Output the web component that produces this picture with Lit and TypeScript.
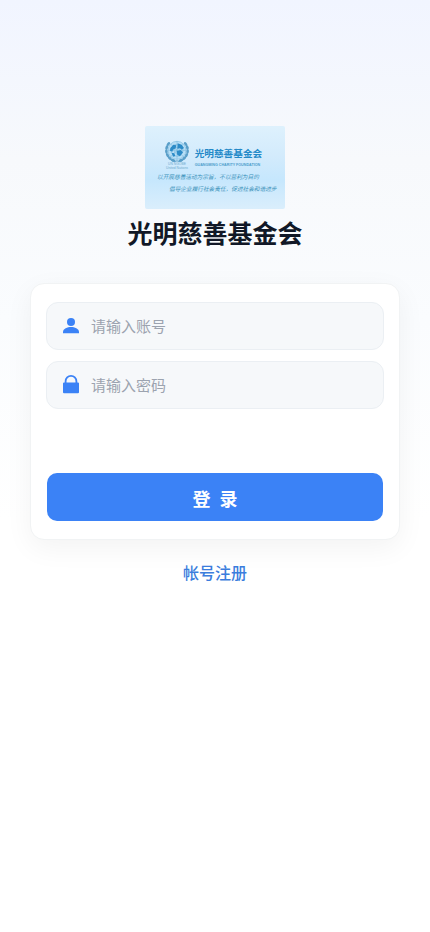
import { LitElement, html, svg, css } from "lit";
import { customElement } from "lit/decorators.js";

const meridians = [0, 45, 90, 135];
const leaves = [1, 2, 3, 4, 5, 6];

@customElement("foundation-banner")
class FoundationBanner extends LitElement {
  static styles = css`
    :host {
      display: block;
      width: 140px;
    }
    .banner {
      display: block;
      width: 100%;
      border-radius: 2px;
      font-family: "Liberation Sans", "Noto Sans CJK SC", sans-serif;
    }
    .name {
      font-size: 29px;
      font-weight: 700;
      fill: #2389c8;
    }
    .latin {
      font-size: 11px;
      font-weight: 700;
      fill: #4d9dcc;
    }
    .caption {
      font-size: 10px;
      fill: #6fa9cd;
      text-anchor: middle;
    }
    .motto {
      font-size: 17px;
      font-style: italic;
      fill: #3a91ba;
    }
  `;

  render() {
    return html`
      <svg class="banner" viewBox="0 0 420 249" role="img" aria-label="光明慈善基金会">
        <defs>
          <linearGradient id="sky" x1="0" y1="0" x2="0" y2="1">
            <stop offset="0" stop-color="#def1fd" />
            <stop offset="0.35" stop-color="#d3ebfc" />
            <stop offset="0.65" stop-color="#c6e7fd" />
            <stop offset="1" stop-color="#daeefc" />
          </linearGradient>
        </defs>
        <rect width="420" height="249" fill="url(#sky)" />
        <g fill="none" stroke="#7dbbe0" stroke-width="2">
          <circle cx="96" cy="73" r="27" fill="#b9dff6" />
          <circle cx="96" cy="73" r="18" />
          <circle cx="96" cy="73" r="9" />
          ${meridians.map(
            (a) => svg`<path d="M69 73h54" transform=${`rotate(${a} 96 73)`} />`
          )}
        </g>
        <g fill="#2c8bc7">
          <path d="M76 66l9-10 9 2-2 9-8 4-2 6-7-3zM98 52l12 4 7 10-7 5-6-5-7 3zM95 75l12-3 7 7-9 12-8-4zM80 80l8 2 3 8-7 2z" />
        </g>
        <g fill="#5a9fc9">
          ${leaves.map((i) => {
            const a = i * 21;
            return svg`
              <ellipse cx="96" cy="105" rx="7" ry="4" transform=${`rotate(${a} 96 73)`} />
              <ellipse cx="96" cy="105" rx="7" ry="4" transform=${`rotate(${-a} 96 73)`} />`;
          })}
          <path d="M80 101q8 6 16 2q8 4 16-2l2 3q-9 6-18 2q-9 4-18-2z" />
        </g>
        <text class="caption" x="96" y="118">UN NGOBE</text>
        <text class="caption" x="96" y="128">United Nations</text>
        <text class="name" x="149" y="94">光明慈善基金会</text>
        <text class="latin" x="149" y="119">GUANGMING CHARITY FOUNDATION</text>
        <text class="motto" x="36" y="160">以开展慈善活动为宗旨，不以营利为目的</text>
        <text class="motto" x="72" y="195">倡导企业履行社会责任，促进社会和谐进步</text>
      </svg>
    `;
  }
}

@customElement("app-root")
class AppRoot extends LitElement {
  static styles = css`
    :host {
      display: block;
      box-sizing: border-box;
      min-height: 100vh;
      padding: 126px 30px 24px;
      background: linear-gradient(180deg, #f1f5ff 0, #f7f9fc 160px, #fafcfe 320px, #fff 520px);
      font-family: "Noto Sans CJK SC", sans-serif;
    }
    * {
      box-sizing: border-box;
    }
    .header {
      display: flex;
      flex-direction: column;
      align-items: center;
      gap: 6px;
      margin-bottom: 34px;
    }
    .title {
      margin: 0;
      font-size: 25px;
      line-height: 34px;
      font-weight: 700;
      color: #111827;
    }
    .card {
      display: flex;
      flex-direction: column;
      gap: 11px;
      padding: 18px 15px;
      border: 1px solid #f1f3f4;
      border-radius: 14px;
      background: #fff;
      box-shadow: 0 8px 28px rgba(0, 0, 0, 0.05);
    }
    .field {
      display: flex;
      align-items: center;
      gap: 8px;
      height: 48px;
      padding: 0 12px;
      border: 1px solid #ebeff3;
      border-radius: 12px;
      background: #f6f8fa;
    }
    .icon {
      flex: none;
      width: 24px;
      height: 24px;
      fill: #3b82f6;
    }
    .input {
      flex: 1;
      min-width: 0;
      padding: 0;
      border: 0;
      outline: 0;
      background: none;
      font-family: inherit;
      font-size: 15px;
      line-height: 24px;
      color: #111827;
    }
    .input::placeholder {
      color: #9ca3af;
      opacity: 1;
    }
    .submit {
      height: 48px;
      margin: 53px 1px 0;
      padding: 2px 0 0;
      border: 0;
      border-radius: 10px;
      background: #3b82f6;
      color: #fff;
      font-family: inherit;
      font-size: 18px;
      font-weight: 700;
    }
    .footer {
      display: flex;
      justify-content: center;
      margin-top: 20px;
    }
    .register {
      font-size: 16px;
      line-height: 24px;
      font-weight: 500;
      color: #3b7ddd;
      text-decoration: none;
    }
  `;

  render() {
    return html`
      <header class="header">
        <foundation-banner></foundation-banner>
        <h1 class="title">光明慈善基金会</h1>
      </header>
      <form class="card" @submit=${(e: Event) => e.preventDefault()}>
        <label class="field">
          <svg class="icon" viewBox="0 0 24 24" aria-hidden="true">
            <circle cx="12" cy="8" r="4" />
            <path d="M4 19.300v-1.300c0-3.300 4.500-5 8-5s8 1.700 8 5v1.300z" />
          </svg>
          <input class="input" type="text" aria-label="账号" placeholder="请输入账号" />
        </label>
        <label class="field">
          <svg class="icon" viewBox="0 0 24 24" aria-hidden="true">
            <path
              fill-rule="evenodd"
              d="M5.700 9.500V8.300a6.300 6.300 0 0 1 12.600 0V9.500h.7a1 1 0 0 1 1 1v8.800a1 1 0 0 1-1 1H5a1 1 0 0 1-1-1V10.500a1 1 0 0 1 1-1zM7.500 9.500h9V8.300a4.500 4.500 0 0 0-9 0z"
            />
          </svg>
          <input class="input" type="password" aria-label="密码" placeholder="请输入密码" />
        </label>
        <button class="submit" type="submit">登&ensp;录</button>
      </form>
      <footer class="footer">
        <a class="register" href="#register">帐号注册</a>
      </footer>
    `;
  }
}
